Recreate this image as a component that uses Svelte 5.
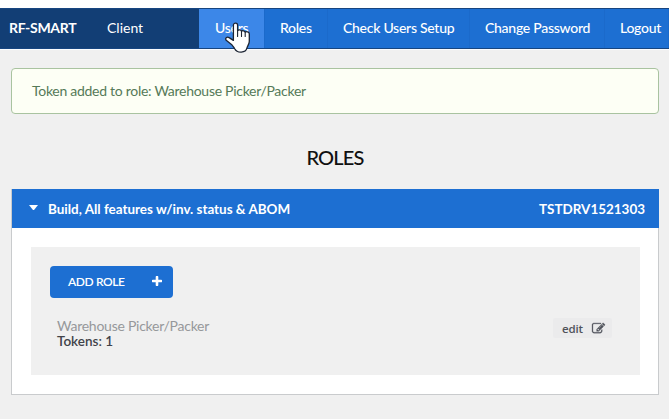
<script>
  const links = [
    { label: 'Users', width: 66, pad: 16, active: true },
    { label: 'Roles', width: 63, pad: 15 },
    { label: 'Check Users Setup', width: 142, pad: 15 },
    { label: 'Change Password', width: 135, pad: 15 },
    { label: 'Logout', width: 64, pad: 15 }
  ];
</script>

<div class="page">
  <nav>
    <div class="brand"><strong>RF-SMART</strong><span>Client</span></div>
    {#each links as link}
      <a href="#top" class:active={link.active} style="width: {link.width}px; padding-left: {link.pad}px">{link.label}</a>
    {/each}
  </nav>
  <svg class="cursor" viewBox="0 0 26 32" width="26" height="32">
    <path d="M8.4 3.2C8.4.4 12.6.4 12.6 3.2V8.6c.7-1.3 3.7-1 3.9.8.8-1.2 3.5-.8 3.7 1 .9-1.2 3.9-.8 4.1 1.3v7.6c0 2.8-1.8 4.3-2.4 6.9-1.1 4.8-9.6 5.5-12.2.5-.8-1.7-2-2.8-3.2-4.3L1.2 18.3c-1.5-2.1.8-4 2.9-2.7l4.3 2.8z" fill="#fff" stroke="#1c2433" stroke-width="1.3" stroke-linejoin="round" />
    <path d="M12.6 9V14.5M16.5 10V14.5M20.2 11V14.5" fill="none" stroke="#1c2433" stroke-width="1.1" stroke-linecap="round" />
  </svg>
  <main>
    <div class="alert"><span>Token added to role: Warehouse Picker/Packer</span></div>
    <h1><span>ROLES</span></h1>
    <section>
      <header>
        <i class="caret"></i>
        <span class="name">Build, All features w/inv. status &amp; ABOM</span>
        <span class="account">TSTDRV1521303</span>
      </header>
      <div class="panel">
        <button class="add">
          <span>ADD ROLE</span>
          <svg width="10" height="10" viewBox="0 0 10 10"><path d="M5 1V9M1 5H9" stroke="#fff" stroke-width="2.6" stroke-linecap="round" /></svg>
        </button>
        <div class="role">
          <div class="info">
            <div class="title">Warehouse Picker/Packer</div>
            <div class="tokens">Tokens: 1</div>
          </div>
          <button class="edit">
            <span>edit</span>
            <svg width="13" height="13" viewBox="0 0 1792 1792" fill="#50535c" stroke="#50535c" stroke-width="40"><path d="M888 1184l116-116-152-152-116 116v56h96v96h56zm440-720q-16-16-33 1l-350 350q-17 17-1 33t33-1l350-350q17-17 1-33zm80 594v190q0 119-84.5 203.5t-203.5 84.5h-832q-119 0-203.5-84.5t-84.5-203.5v-832q0-119 84.5-203.5t203.5-84.5h832q63 0 117 25 15 7 18 23 3 17-9 29l-49 49q-14 14-32 8-23-6-45-6h-832q-66 0-113 47t-47 113v832q0 66 47 113t113 47h832q66 0 113-47t47-113v-126q0-13 9-22l64-64q15-15 35-7t20 29zm-96-738l288 288-672 672h-288v-288zm444 132l-92 92-288-288 92-92q28-28 68-28t68 28l152 152q28 28 28 68t-28 68z" /></svg>
          </button>
        </div>
      </div>
    </section>
  </main>
</div>

<style>
  :global(body) { margin: 0; background: #f0f0f0; }
  .page {
    position: relative;
    box-sizing: border-box;
    width: 669px;
    height: 419px;
    overflow: hidden;
    border-top: 8px solid #fff;
    background: #f0f0f0;
    font-family: Lato, sans-serif;
    font-size: 14px;
  }
  .page * { box-sizing: border-box; }
  nav {
    display: flex;
    height: 41px;
    border-top: 1px solid #174580;
    border-bottom: 1px solid #174580;
    background: #1d6fd2;
    color: #fff;
    line-height: 38px;
    white-space: nowrap;
    box-shadow: 0 1px #fafcff;
  }
  .brand { display: flex; width: 199px; padding-left: 9px; background: #123e75; }
  .brand strong { width: 98px; letter-spacing: -0.3px; }
  nav a {
    flex: none;
    color: #fff;
    text-decoration: none;
    font-weight: 500;
    letter-spacing: -0.27px;
    border-right: 1px solid #1b6acb;
  }
  nav a.active { background: #3c87e8; }
  .cursor { position: absolute; left: 225px; top: 14px; }
  main { padding: 19px 10px 0 11px; }
  .alert {
    height: 46px;
    padding-left: 20px;
    border: 1px solid #a9c3a0;
    border-radius: 4px;
    background: #fdfff5;
    color: #557a58;
    line-height: 43px;
    letter-spacing: -0.28px;
  }
  h1 {
    margin: 30px 0 0;
    color: #111;
    font-size: 20px;
    font-weight: 500;
    letter-spacing: -0.8px;
    line-height: 26px;
    text-align: center;
  }
  section {
    height: 206px;
    margin-top: 19px;
    border: 1px solid #c9cbcd;
    background: #fff;
  }
  header {
    display: flex;
    align-items: center;
    height: 39px;
    margin: -1px -1px 0 0;
    padding: 1px 14px 0 17px;
    background: #1d6fd2;
    color: #fff;
    font-size: 13.45px;
    font-weight: 700;
  }
  .caret {
    width: 9px;
    margin: -3px 10px 0 0;
    border: 4.5px solid transparent;
    border-top: 5px solid #fff;
    border-bottom: 0;
  }
  .account { margin-left: auto; }
  .panel {
    height: 128px;
    margin: 19px 18px 0 19px;
    padding: 19px 28px 0 19px;
    background: #f0f0f0;
  }
  button { display: flex; align-items: center; border: 0; font-family: inherit; }
  .add {
    justify-content: space-between;
    width: 123px;
    height: 32px;
    padding: 0 11px 2px 18px;
    border-radius: 4px;
    background: #1d6fd2;
    color: #fff;
    font-size: 12px;
    font-weight: 600;
    letter-spacing: -0.4px;
  }
  .role { display: flex; justify-content: space-between; margin-top: 19px; padding-left: 7px; }
  .info { line-height: 16px; padding-top: 1px; }
  .title { color: #96989b; letter-spacing: -0.25px; }
  .tokens { color: #414349; font-size: 13.5px; font-weight: 600; letter-spacing: 0; line-height: 15px; }
  .edit {
    gap: 9px;
    width: 59px;
    height: 20px;
    margin-top: 1px;
    padding: 0 6px 0 9px;
    border-radius: 2px;
    background: #ebebec;
    color: #50525a;
    font-family: "Open Sans", sans-serif;
    font-size: 11.5px;
    font-weight: 600;
    letter-spacing: -0.2px;
  }
  .edit svg { flex: none; overflow: visible; }
</style>
